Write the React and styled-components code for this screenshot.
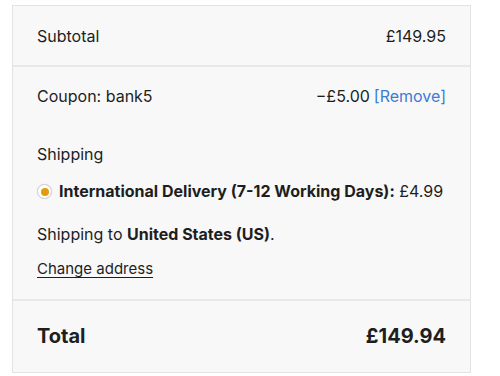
import React from 'react'
import styled, { createGlobalStyle } from 'styled-components'

const GlobalStyle = createGlobalStyle`
  body {
    margin: 0;
    background: #ffffff;
    font-family: 'Inter', 'Liberation Sans', sans-serif;
    color: #1e1e1e;
  }
`

const Page = styled.div`
  padding: 5px 0 0 12px;
`

const Totals = styled.div`
  width: 457px;
  border: 1px solid #e3e3e3;
  background: #f8f8f8;
`

const Row = styled.div`
  display: flex;
  justify-content: space-between;
  align-items: center;
  padding: ${p => p.$pad || '20px 24px 18px'};
  border-top: ${p => (p.$divided ? '2px solid #e8e8e8' : 'none')};
  font-size: ${p => (p.$big ? '20px' : '16px')};
  font-weight: ${p => (p.$big ? 700 : 400)};
  line-height: 21px;
`

const Section = styled.div`
  border-top: 2px solid #e8e8e8;
  padding: 19px 24px 20px;
  font-size: 16px;
  line-height: 21px;
`

const Line = styled.div`
  display: flex;
  justify-content: space-between;
  align-items: center;
  white-space: nowrap;
  margin-top: ${p => p.$gap || 0}px;
`

const RemoveLink = styled.a`
  color: #3b7bd3;
  text-decoration: none;
  margin-left: 4px;
`

const ShippingOption = styled.label`
  display: flex;
  align-items: center;
  gap: 7px;
`

const Radio = styled.span`
  width: 15px;
  height: 15px;
  flex-shrink: 0;
  border-radius: 50%;
  background: #ffffff;
  border: 1px solid #cfcfcf;
  box-shadow: 0 0 1px rgba(0, 0, 0, 0.15);
  box-sizing: border-box;
  display: flex;
  align-items: center;
  justify-content: center;
  &::after {
    content: '';
    width: 8px;
    height: 8px;
    border-radius: 50%;
    background: #e39b10;
  }
`

const ChangeLink = styled.a`
  color: #1e1e1e;
  font-size: 15px;
  text-decoration: underline;
  text-underline-offset: 3px;
`

export default function App() {
  return (
    <>
      <GlobalStyle />
      <Page>
        <Totals>
          <Row $pad="20px 24px 18px">
            <span>Subtotal</span>
            <span>£149.95</span>
          </Row>
          <Section>
            <Line>
              <span>Coupon: bank5</span>
              <span>
                −£5.00<RemoveLink href="#">[Remove]</RemoveLink>
              </span>
            </Line>
            <Line $gap={37}>Shipping</Line>
            <Line $gap={16}>
              <ShippingOption>
                <Radio />
                <span>
                  <b>International Delivery (7-12 Working Days):</b> £4.99
                </span>
              </ShippingOption>
            </Line>
            <Line $gap={22}>
              <span>
                Shipping to <b>United States (US)</b>.
              </span>
            </Line>
            <Line $gap={13}>
              <ChangeLink href="#">Change address</ChangeLink>
            </Line>
          </Section>
          <Row $big $divided $pad="25px 24px 25px">
            <span>Total</span>
            <span>£149.94</span>
          </Row>
        </Totals>
      </Page>
    </>
  )
}
